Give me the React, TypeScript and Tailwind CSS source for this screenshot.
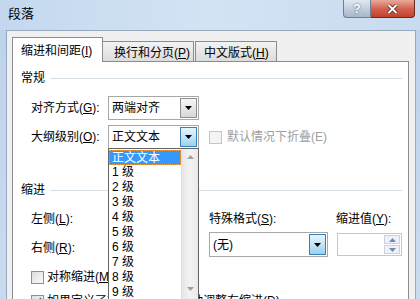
import React from 'react';

const font = "font-['Liberation_Sans','Noto_Sans_CJK_SC',sans-serif]";

function Arrow({ color = '#000' }: { color?: string }) {
  return (
    <svg width="7" height="4" viewBox="0 0 7 4">
      <path d="M0 0 H7 L3.5 4 Z" fill={color} />
    </svg>
  );
}

function Combo({ text, width, height = 24, focused = false }: { text: string; width: string; height?: number; focused?: boolean }) {
  return (
    <div
      className={`shrink-0 flex items-stretch bg-white border border-[#a8a8a8] ${width}`}
      style={{ height }}
    >
      <div className="flex-1 flex items-center pl-[3px] text-[12px] text-black whitespace-nowrap overflow-hidden">
        {text}
      </div>
      <div
        className={`w-[17px] m-[1px] flex items-center justify-center border ${
          focused
            ? 'border-[#3c7fb1] bg-gradient-to-b from-[#e5f4fc] via-[#c4e5f6] to-[#98d1ef]'
            : 'border-[#8f8f8f] bg-gradient-to-b from-[#f6f6f6] to-[#d8d8d8]'
        }`}
      >
        <Arrow />
      </div>
    </div>
  );
}

function GroupHeader({ title }: { title: string }) {
  return (
    <div className="flex items-center h-[16px] text-[12px] text-black">
      <span>{title}</span>
      <div className="flex-1 h-px bg-[#d5dfe5] ml-[5px]" />
    </div>
  );
}

function Check({ checked = false, disabled = false }: { checked?: boolean; disabled?: boolean }) {
  return (
    <div
      className={`shrink-0 w-[13px] h-[13px] border flex items-center justify-center ${
        disabled ? 'border-[#c5c5c5] bg-[#f4f4f4]' : 'border-[#8e8f8f] bg-gradient-to-br from-[#dcdcdc] to-[#fbfbfb]'
      }`}
    >
      {checked && (
        <svg width="9" height="9" viewBox="0 0 9 9">
          <path d="M1 4.5 L3.5 7 L8 1" stroke="#4a5f97" strokeWidth="1.8" fill="none" />
        </svg>
      )}
    </div>
  );
}

export default function App() {
  const levels = ['1 级', '2 级', '3 级', '4 级', '5 级', '6 级', '7 级', '8 级', '9 级'];

  return (
    <div className={`w-[420px] h-[299px] overflow-hidden flex flex-col bg-gradient-to-b from-[#bcd2ec] to-[#c9dbef] ${font}`}>
      {/* 标题栏 */}
      <div className="shrink-0 h-[30px] flex items-start bg-gradient-to-r from-[#c3d8ef] via-[#d4e3f4] to-[#c9dbf0]">
        <div className="pl-[8px] pt-[6px] text-[13px] leading-[16px] text-black">段落</div>
        <div className="flex-1" />
        <div className="flex mr-[5px]">
          <div className="w-[28px] h-[18px] rounded-bl-[4px] border border-t-0 border-[#6e7f96] bg-gradient-to-b from-[#e1e8f1] to-[#a7b6ca] flex items-center justify-center text-[12px] font-bold text-white [text-shadow:0_0_2px_#3b4a60]">
            ?
          </div>
          <div className="w-[44px] h-[18px] rounded-br-[4px] border border-t-0 border-l-0 border-[#6b2a20] bg-gradient-to-b from-[#e9a99c] via-[#d1634f] to-[#c2402b] flex items-center justify-center">
            <svg width="11" height="10" viewBox="0 0 11 10">
              <path d="M1.5 1 L9.5 9 M9.5 1 L1.5 9" stroke="#3d1812" strokeWidth="3.4" />
              <path d="M1.5 1 L9.5 9 M9.5 1 L1.5 9" stroke="#fff" strokeWidth="2" />
            </svg>
          </div>
        </div>
      </div>

      {/* 客户区 */}
      <div className="flex-1 min-h-0 flex pl-[6px] pr-[4px]">
        <div className="flex-1 flex flex-col bg-[#f0f0f0] border-l border-t border-r border-[#98a9bd] pl-[5px] pr-[6px] pt-[6px]">
          {/* 选项卡 */}
          <div className="shrink-0 flex items-end h-[25px] -mb-px relative z-10 text-[12px] text-black">
            <div className="w-[91px] h-[25px] bg-white border border-b-0 border-[#898c95] pl-[8px] pt-[4px]">
              缩进和间距(<u>I</u>)
            </div>
            <div className="w-[91px] h-[21px] border border-l-0 border-[#898c95] bg-gradient-to-b from-[#f3f3f3] to-[#dcdcdc] pl-[11px] pt-[2px]">
              换行和分页(<u>P</u>)
            </div>
            <div className="w-[82px] h-[21px] ml-[1px] border border-[#898c95] bg-gradient-to-b from-[#f3f3f3] to-[#dcdcdc] pl-[8px] pt-[2px]">
              中文版式(<u>H</u>)
            </div>
          </div>

          {/* 面板 */}
          <div className="flex-1 shrink-0 relative bg-white border border-[#898c95] pl-[8px] pr-[6px] pt-[8px] text-[12px] text-black">
            <GroupHeader title="常规" />

            <div className="mt-[10px] flex items-center pl-[10px]">
              <div className="w-[77px] whitespace-nowrap">对齐方式(<u>G</u>):</div>
              <Combo text="两端对齐" width="w-[91px]" />
            </div>

            <div className="mt-[5px] flex items-center pl-[10px]">
              <div className="w-[77px] whitespace-nowrap">大纲级别(<u>O</u>):</div>
              <Combo text="正文文本" width="w-[91px]" focused />
              <div className="ml-[10px] flex items-center gap-[5px] text-[#a0a0a0]">
                <Check disabled />
                <span>默认情况下折叠(E)</span>
              </div>
            </div>

            <div className="mt-[33px]">
              <GroupHeader title="缩进" />
            </div>

            <div className="mt-[12px] flex pl-[10px]">
              <div className="w-[178px] flex flex-col">
                <div className="h-[16px]">左侧(<u>L</u>):</div>
                <div className="h-[16px] mt-[13px]">右侧(<u>R</u>):</div>
              </div>
              <div className="w-[128px] flex flex-col">
                <div className="h-[16px]">特殊格式(<u>S</u>):</div>
                <div className="mt-[6px]">
                  <Combo text="(无)" width="w-[119px]" height={25} focused />
                </div>
              </div>
              <div className="flex flex-col">
                <div className="h-[16px] -ml-[1px]">缩进值(<u>Y</u>):</div>
                <div className="mt-[7px] w-[65px] h-[23px] border border-[#c7c7c7] bg-white flex justify-end p-[1px]">
                  <div className="w-[16px] flex flex-col gap-px">
                    <div className="flex-1 border border-[#c9d3de] bg-[#eef2f7] flex items-center justify-center">
                      <svg width="7" height="4" viewBox="0 0 7 4"><path d="M0 4 H7 L3.5 0 Z" fill="#7088b4" /></svg>
                    </div>
                    <div className="flex-1 border border-[#c9d3de] bg-[#eef2f7] flex items-center justify-center">
                      <Arrow color="#7088b4" />
                    </div>
                  </div>
                </div>
              </div>
            </div>

            <div className="mt-[12px] h-[16px] flex items-center gap-[3px] pl-[10px]">
              <Check />
              <span>对称缩进(<u>M</u>)</span>
            </div>
            <div className="mt-[8px] h-[16px] flex items-center gap-[3px] pl-[10px] whitespace-nowrap">
              <Check checked />
              <span>如果定义了文档网格，则自动调整右缩进(<u>D</u>)</span>
            </div>

            {/* 下拉列表 */}
            <div className="absolute left-[95px] top-[86px] w-[91px] h-[152px] bg-white border border-[#646464] flex z-20">
              <div className="flex-1 flex flex-col pt-px">
                <div className="h-[15px] bg-[#3399ff] text-white pl-[2px] leading-[14px] border border-dotted border-[#f0a040]">
                  正文文本
                </div>
                {levels.map((l) => (
                  <div key={l} className="h-[15px] pl-[3px] leading-[15px] whitespace-pre">
                    {l}
                  </div>
                ))}
              </div>
              <div className="w-[17px] bg-gradient-to-r from-[#e6e6e6] via-[#f3f3f3] to-[#e9e9e9] border-l border-[#e0e0e0] flex flex-col items-center justify-between pt-[6px] pb-[8px]">
                <svg width="7" height="4" viewBox="0 0 7 4"><path d="M0 4 H7 L3.5 0 Z" fill="#a0a0a0" /></svg>
                <Arrow color="#a0a0a0" />
              </div>
            </div>
          </div>
        </div>
      </div>
    </div>
  );
}
